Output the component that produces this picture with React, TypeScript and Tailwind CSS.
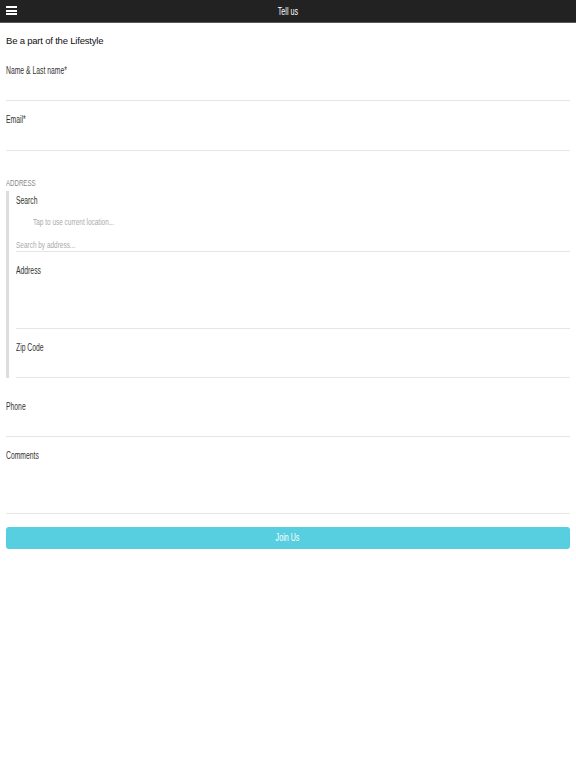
const face = "font-['Liberation_Sans',Arial,sans-serif]";

// narrow label text: the app uses a condensed face, squeeze Arial-metric text to match
function N({ children, center = false }: { children: React.ReactNode; center?: boolean }) {
  return (
    <span className={`inline-block whitespace-nowrap scale-x-[0.68] ${center ? "origin-center" : "origin-left"}`}>
      {children}
    </span>
  );
}

function Field({ label, h, top = "pt-[13px]" }: { label: string; h: string; top?: string }) {
  return (
    <div className={top}>
      <div className="text-[10px] leading-[12px] text-[#333]">
        <N>{label}</N>
      </div>
      <div className={`${h} border-b border-[#e6e6e6]`} />
    </div>
  );
}

export default function App() {
  return (
    <div className={`min-h-[768px] bg-white ${face}`}>
      {/* top bar */}
      <div className="relative flex h-[23px] items-center justify-center border-b border-[#5a5a5a] bg-[#222222]">
        <div className="absolute left-[6px] top-[6px] flex w-[11px] flex-col gap-[1.5px]">
          <span className="h-[2px] bg-white" />
          <span className="h-[2px] bg-white" />
          <span className="h-[2px] bg-white" />
        </div>
        <span className="text-[10.5px] leading-[12px] text-white">
          <N center>Tell us</N>
        </span>
      </div>

      <div className="px-[6px]">
        <h1 className="pt-[10px] text-[9.5px] leading-[16px] tracking-[-0.2px] text-[#111]">
          Be a part of the Lifestyle
        </h1>

        <Field label="Name & Last name*" h="h-[24px]" top="pt-[16px]" />
        <Field label="Email*" h="h-[25px]" />

        <div className="pt-[26px] text-[9px] leading-[12px] text-[#888]">
          <N>ADDRESS</N>
        </div>
        <div className="mt-[2px] border-l-[3px] border-[#dddddd] pl-[7px]">
          <div className="pt-[4px] text-[10px] leading-[12px] text-[#333]">
            <N>Search</N>
          </div>
          <div className="pl-[17px] pt-[9px] text-[9.5px] leading-[12px] text-[#aaa]">
            <N>Tap to use current location...</N>
          </div>
          <div className="border-b border-[#e6e6e6] pt-[11px] text-[9.5px] leading-[12px] text-[#aaa]">
            <N>Search by address...</N>
          </div>
          <div className="pt-[13px]">
            <div className="text-[10px] leading-[12px] text-[#333]">
              <N>Address</N>
            </div>
            <div className="h-[52px] border-b border-[#e6e6e6]" />
          </div>
          <div className="pt-[13px]">
            <div className="text-[10px] leading-[12px] text-[#333]">
              <N>Zip Code</N>
            </div>
            <div className="h-[24px] border-b border-[#e6e6e6]" />
          </div>
        </div>

        <Field label="Phone" h="h-[24px]" top="pt-[23px]" />
        <Field label="Comments" h="h-[52px]" />

        <button className="mt-[13px] flex h-[22px] w-full items-center justify-center rounded-[3px] bg-[#57cfe0] text-[10.5px] text-white">
          <N center>Join Us</N>
        </button>
      </div>
    </div>
  );
}
